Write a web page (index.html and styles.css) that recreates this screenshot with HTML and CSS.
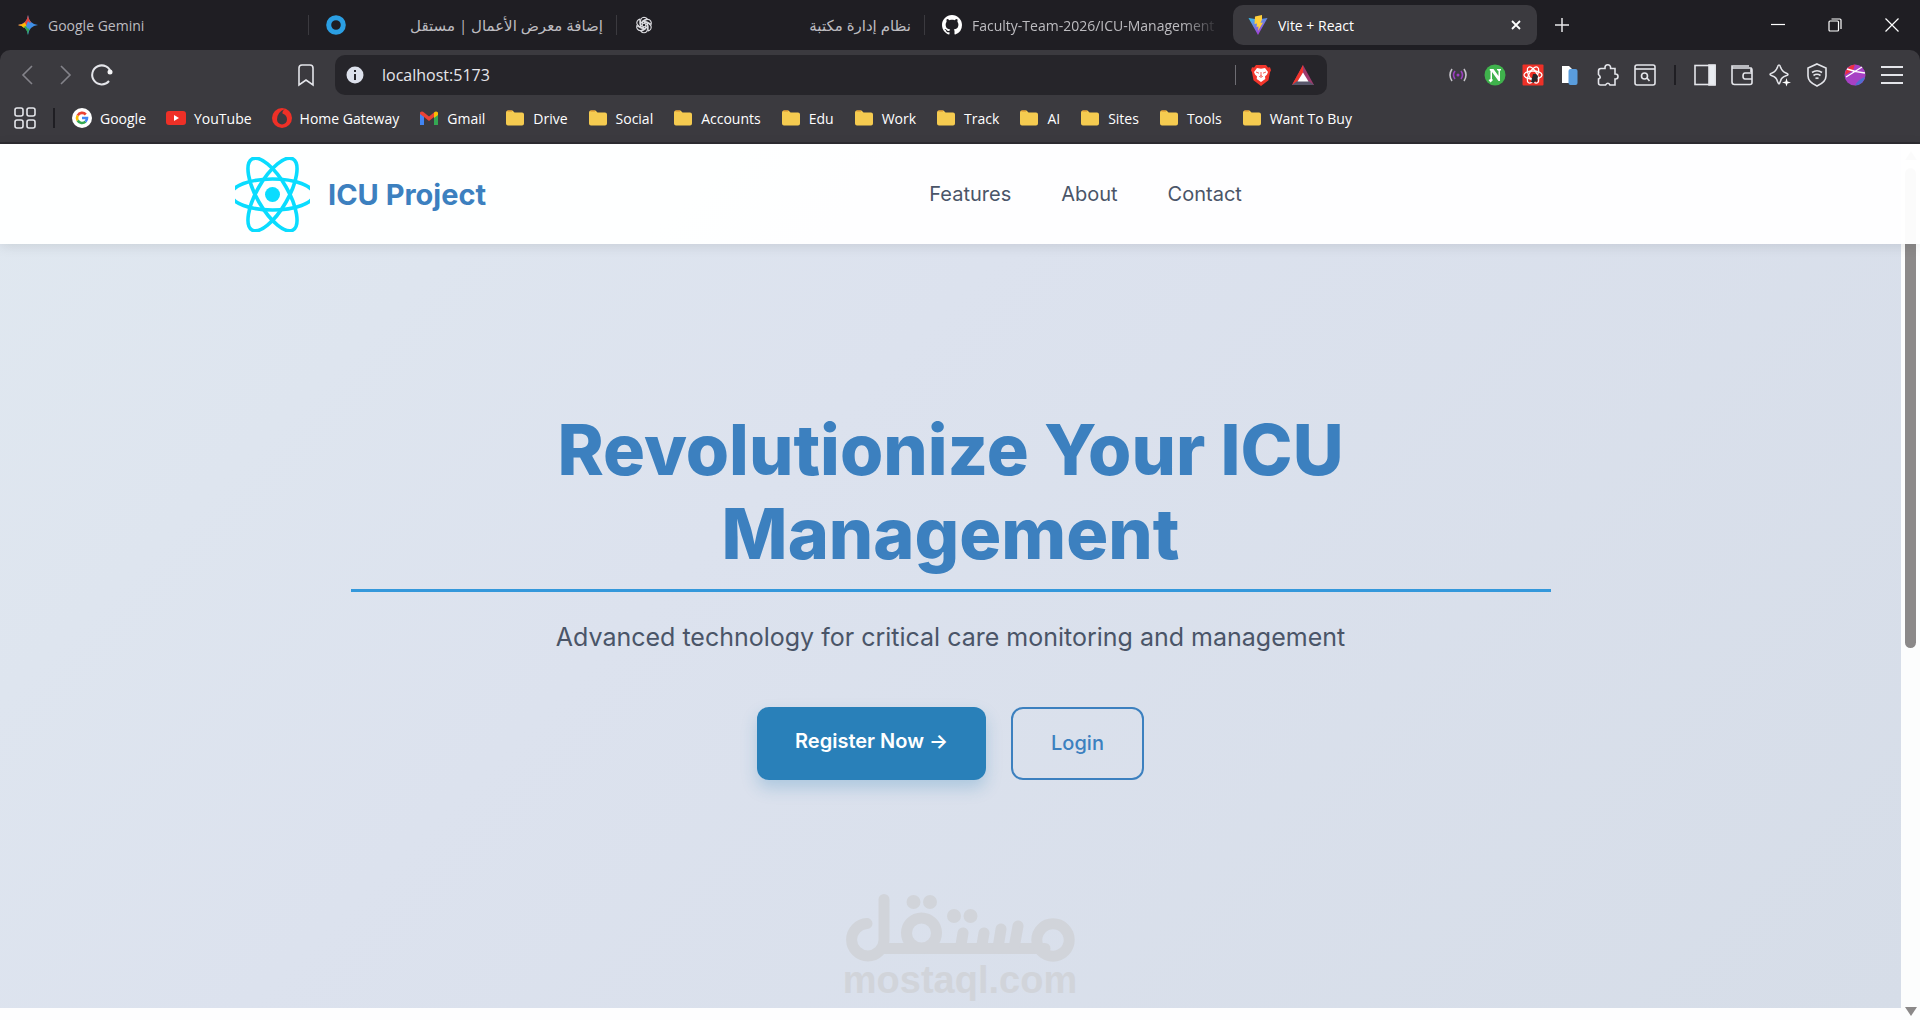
FILE: index.html
```html
<!DOCTYPE html>
<html lang="en">
<head>
    <meta charset="UTF-8">
    <meta name="viewport" content="width=device-width, initial-scale=1.0">
    <title>Vite + React</title>
    <link rel="stylesheet" href="styles.css">
</head>
<body>
    <svg class="sprite" aria-hidden="true">
        <symbol id="folder" viewBox="0 0 20 20">
            <path d="M1 4.500a2 2 0 0 1 2-2h4.500l2 2H17a2 2 0 0 1 2 2V15.500a2 2 0 0 1-2 2H3a2 2 0 0 1-2-2z" fill="#f5cb50"/>
            <path d="M2.500 3h4.500" stroke="#e0962f" stroke-width="1.200"/>
        </symbol>
    </svg>

    <div class="browser">
        <div class="tab-strip">
            <div class="tab">
                <svg class="icon" viewBox="0 0 20 20">
                    <path d="M10 0Q11 9 20 10Q11 11 10 20Q9 11 0 10Q9 9 10 0" fill="#3f8fe8"/>
                    <path d="M10 0Q9 9 0 10L7 12L13 7Q10.500 5 10 0" fill="#ea4335"/>
                    <path d="M0 10Q4.500 9.500 7 7.500L9 12L6 13Q4 10.500 0 10" fill="#fbbc04"/>
                    <path d="M5.500 12Q9 14 10 20Q10.300 16 11.500 14L8 11z" fill="#34a853"/>
                    <path d="M10 6L14 10L10 14L8 11z" fill="#3f8fe8"/>
                </svg>
                <span class="tab-title">Google Gemini</span>
            </div>
            <div class="tab">
                <svg class="icon" viewBox="0 0 20 20"><circle cx="10" cy="10" r="7.300" fill="none" stroke="#2b9fe3" stroke-width="5"/></svg>
                <span class="tab-title" dir="rtl" lang="ar">إضافة معرض الأعمال | مستقل</span>
            </div>
            <div class="tab">
                <svg class="icon" viewBox="0 0 20 20" fill="none" stroke="#dcdce0" stroke-width="1.100">
                    <g id="petal"><path d="M10 6.200L13.500 8.200V13.500Q13.500 17.500 10 17.800Q8 17.800 7 16.500L11 14.200Q11.700 13.700 11.700 13V9"/></g>
                    <use href="#petal" transform="rotate(60 10 10)"/>
                    <use href="#petal" transform="rotate(120 10 10)"/>
                    <use href="#petal" transform="rotate(180 10 10)"/>
                    <use href="#petal" transform="rotate(240 10 10)"/>
                    <use href="#petal" transform="rotate(300 10 10)"/>
                </svg>
                <span class="tab-title" dir="rtl" lang="ar">نظام إدارة مكتبة</span>
            </div>
            <div class="tab last">
                <svg class="icon" viewBox="0 0 16 16"><path fill="#fff" d="M8 0C3.580 0 0 3.580 0 8c0 3.540 2.290 6.530 5.470 7.590.4.070.55-.17.55-.38 0-.19-.01-.82-.01-1.490-2.010.37-2.530-.49-2.690-.94-.09-.23-.48-.94-.82-1.130-.28-.15-.68-.52-.01-.53.63-.01 1.080.58 1.230.82.72 1.210 1.870.87 2.330.66.07-.52.28-.87.51-1.070-1.780-.2-3.640-.89-3.640-3.950 0-.87.31-1.590.82-2.150-.08-.2-.36-1.020.08-2.120 0 0 .67-.21 2.200.82.64-.18 1.320-.27 2-.27s1.360.09 2 .27c1.530-1.040 2.200-.82 2.200-.82.44 1.100.16 1.920.08 2.120.51.56.82 1.270.82 2.150 0 3.070-1.870 3.750-3.650 3.950.29.25.54.73.54 1.480 0 1.070-.01 1.930-.01 2.200 0 .21.15.46.55.38A8.010 8.010 0 0 0 16 8c0-4.420-3.580-8-8-8z"/></svg>
                <span class="tab-title">Faculty-Team-2026/ICU-Management</span>
            </div>
            <div class="tab active">
                <svg class="icon" viewBox="0 0 20 20">
                    <defs><linearGradient id="vite" x1="0" y1="0" x2=".5" y2="1"><stop offset="0" stop-color="#35c4ef"/><stop offset="1" stop-color="#a83bd6"/></linearGradient></defs>
                    <path d="M.5 3L10 20L19.500 3L13 4H7z" fill="url(#vite)"/>
                    <path d="M14 0L7 1.500L6.500 9L9 8.500L8.500 12L10.500 11.500L10 16L15 7.500L12.500 8L14 4.500z" fill="#ffcf3a"/>
                </svg>
                <span class="tab-title">Vite + React</span>
                <button class="tab-close" aria-label="Close tab"><svg viewBox="0 0 10 10" width="10" height="10" stroke="#fff" stroke-width="1.800"><path d="M1 1l8 8M9 1l-8 8"/></svg></button>
            </div>
            <button class="new-tab" aria-label="New tab"><svg width="14" height="14" viewBox="0 0 14 14" stroke="#e8e8ea" stroke-width="1.500"><path d="M7 0v14M0 7h14"/></svg></button>
            <div class="window-buttons">
                <button aria-label="Minimize"><svg viewBox="0 0 14 14"><path d="M0 6.500h14"/></svg></button>
                <button aria-label="Restore"><svg viewBox="0 0 14 14"><rect x="1" y="3" width="9.500" height="10" rx="1"/><path d="M3.500 1H12q1 0 1 1v9"/></svg></button>
                <button aria-label="Close"><svg viewBox="0 0 14 14"><path d="M.5.5l13 13M13.500.5l-13 13"/></svg></button>
            </div>
        </div>

        <div class="toolbar">
            <div class="address-row">
                <div class="nav-buttons">
                    <button class="dim" aria-label="Back"><svg viewBox="0 0 22 22"><path d="M15 2L6 11l9 9"/></svg></button>
                    <button class="dim" aria-label="Forward"><svg viewBox="0 0 22 22"><path d="M7 2l9 9-9 9"/></svg></button>
                    <button aria-label="Reload"><svg viewBox="0 0 22 22"><path d="M18 17A9.500 9.500 0 1 1 20 9" stroke-width="2"/><circle cx="19" cy="8" r="2.500" fill="#f4f4f6" stroke="none"/></svg></button>
                </div>
                <button class="save-page" aria-label="Bookmark this page"><svg viewBox="0 0 22 22"><path d="M4 4q0-3 3-3h8q3 0 3 3v17l-7-5-7 5z"/></svg></button>
                <div class="address-bar">
                    <svg class="info" viewBox="0 0 18 18"><circle cx="9" cy="9" r="8.500" fill="#dde1ec"/><path d="M9 4v2M9 8v6" stroke="#26252a" stroke-width="2"/></svg>
                    <input type="text" aria-label="Address" value="localhost:5173">
                    <span class="bar-divider"></span>
                    <svg class="shield" viewBox="0 0 20 22">
                        <path d="M5 1h10l2 2.500 2-.2 1 3-1 2-1.500 8L10 22 2.500 16.300 1 8.300 0 6.300l1-3 2 .2z" fill="#f2352b"/>
                        <path d="M6 4l4 .8L14 4l3 4-1 2.500-2 2 .3 2.500L10 18l-4.300-3 .3-2.500-2-2L3 8z" fill="#fff"/>
                        <path d="M5 8l3 1.200M15 8l-3 1.200M10 8v3.500l-1.500 1 1.500.8 1.500-.8-1.500-1" fill="none" stroke="#f2352b" stroke-width=".8"/>
                    </svg>
                    <svg class="rewards" viewBox="0 0 22 20"><path d="M11 0L0 20h22z" fill="#9e3a6e"/><path d="M11 0L0 20l6-4.500 5-8z" fill="#f2352b"/><path d="M0 20h22l-5.500-4h-11z" fill="#59576b"/><path d="M11 7.500l-5.500 9h11z" fill="#fff"/></svg>
                </div>
                <div class="extensions">
                    <button aria-label="Live"><svg viewBox="0 0 22 22"><path d="M5 5q-4 6 0 12M17 5q4 6 0 12" stroke="#c4c1c8"/><path d="M8 7q-3 4 0 8M14 7q3 4 0 8" stroke="#9c3fc0"/><circle cx="11" cy="11" r="1.500" fill="#9c3fc0" stroke="none"/></svg></button>
                    <button aria-label="Notes"><svg viewBox="0 0 22 22"><g stroke="none"><circle cx="11" cy="11" r="10.500" fill="#3fb24c"/><path d="M6 5h3.500l5 7V7l-1.500-1V5h4v1L16 7v10h-1.500L8 8v7l1 1-2.500 2.500L4.500 16l2-1V7L5.500 6z" fill="#fff"/></g></svg></button>
                    <button aria-label="React tools"><svg viewBox="0 0 22 22"><rect x=".5" y=".5" width="21" height="21" rx="1" fill="#ee3027" stroke="none"/><g stroke="#fff" stroke-width="1.300"><ellipse cx="11" cy="11" rx="9" ry="4"/><ellipse cx="11" cy="11" rx="9" ry="4" transform="rotate(60 11 11)"/><ellipse cx="11" cy="11" rx="9" ry="4" transform="rotate(120 11 11)"/></g><path d="M11 10h3l2 2-1 6-2-1-1 2-3-1 1-4z" fill="#26252a" stroke="none"/></svg></button>
                    <button aria-label="Clipboard"><svg viewBox="0 0 22 22"><g stroke="none"><path d="M3 2h7l4 4v13H3z" fill="#fff"/><rect x="9.500" y="5" width="9" height="16" rx="2" fill="#5a9ddd"/></g></svg></button>
                    <button aria-label="Extensions"><svg viewBox="0 0 22 22"><path d="M4 4.500h4V3.500a2.800 2.800 0 0 1 5.600 0v1H18V10h.5a2.500 2.500 0 0 1 0 5H18v6h-5q-2-3.500-4.500 0H3.500q-2 0-2-2v-4q3.500-1.500 0-4.500V7q0-2.500 2.500-2.500z"/></svg></button>
                    <button aria-label="Search page"><svg viewBox="0 0 22 22"><rect x="1" y="1" width="20" height="20" rx="2"/><path d="M1 5h20"/><circle cx="10.500" cy="12" r="3"/><path d="M13 14l2.500 3"/></svg></button>
                </div>
                <span class="tool-divider"></span>
                <div class="extensions">
                    <button aria-label="Sidebar"><svg viewBox="0 0 22 22"><rect x="1" y="1.500" width="20" height="19"/><path d="M15 1h6v20h-6z" fill="#e9ecf1"/></svg></button>
                    <button aria-label="Wallet"><svg viewBox="0 0 22 22"><path d="M20 8V4H1V2h17M1 2v16q0 2.500 2.500 2.500H19q2 0 2-2V6q0-2-2-2M21 9h-7q-2 0-2 3t2 3h7"/></svg></button>
                    <button aria-label="Assistant"><svg viewBox="0 0 22 22"><path d="M10 1q1 0 1.500 2Q13 7.500 17 9q2 .8 2 1.500t-2 1.200Q12.500 13 11.500 17 10.500 20 10 20t-1.500-2.500Q7.500 13 3 11.700 1 11 1 10.300T3 9q4-1.500 5.500-6Q9 1 10 1z"/><path d="M17.500 14l1 3.500 3.500 1-3.500 1-1 3-1-3-3.500-1 3.500-1z" fill="#fff" stroke="none"/></svg></button>
                    <button aria-label="VPN"><svg viewBox="0 0 22 22"><path d="M11 0l9 4v8q0 6-9 10-9-4-9-10V4z"/><path d="M6 8.500q5-3.500 10 0M7.500 11.500q3.500-2.500 7 0M9.500 14.500q1.500-1 3 0"/></svg></button>
                    <button aria-label="Profile"><svg viewBox="0 0 22 22"><circle cx="11" cy="11" r="10.500" fill="#a740c4" stroke="none"/><path d="M1 11A10.500 10.500 0 0 1 11 .5L9 6z" fill="#ee3040" stroke="none"/><path d="M21 13a10.500 10.500 0 0 1-10 8.500q3-6 10-8.500" fill="#4e6fd0" stroke="none"/><path d="M2 13L18 3M3 5q8 3 18 4" stroke="#fff" stroke-width="1.400"/></svg></button>
                    <button aria-label="Menu"><svg viewBox="0 0 22 22"><g stroke-width="2"><path d="M0 3h22M0 11h22M0 19h22"/></g></svg></button>
                </div>
            </div>

            <div class="bookmarks">
                <button class="apps" aria-label="All bookmarks"><svg viewBox="0 0 22 22"><rect x="1" y="1" width="8" height="8" rx="2"/><rect x="13" y="1" width="8" height="8" rx="2"/><rect x="1" y="13" width="8" height="8" rx="2"/><rect x="13" y="13" width="8" height="8" rx="2"/></svg></button>
                <span class="tool-divider"></span>
                <a href="#"><svg class="icon" viewBox="0 0 20 20" fill="none" stroke-width="2.600"><circle cx="10" cy="10" r="10" fill="#fff"/><path d="M5.700 7.500A5 5 0 0 1 13.800 6.500" stroke="#ea4335"/><path d="M5.700 12.500a5 5 0 0 1 0-5" stroke="#fbbc04"/><path d="M13.500 13.600A5 5 0 0 1 5.700 12.500" stroke="#34a853"/><path d="M10 10h5a5 5 0 0 1-1.500 3.600" stroke="#4285f4"/></svg>Google</a>
                <a href="#"><svg class="icon" viewBox="0 0 20 20"><rect y="3" width="20" height="14" rx="3" fill="#ee3027"/><path d="M8 7l5 3-5 3z" fill="#fff"/></svg>YouTube</a>
                <a href="#"><svg class="icon" viewBox="0 0 20 20"><circle cx="10" cy="10" r="10" fill="#ee3027"/><path d="M13 1Q10 3 10.500 5.500Q15 7 15 11.500A5 5 0 0 1 5 11.500Q5 4 13 1" fill="#3b3a3f"/></svg>Home Gateway</a>
                <a href="#"><svg class="icon" viewBox="0 0 20 20"><path d="M1 5v12h4V8z" fill="#4285f4"/><path d="M15 8v9h4V5z" fill="#34a853"/><path d="M1 4.500Q3 2.500 5 4.500l5 4 5-4v4.500l-5 4-5-4-4-3z" fill="#ea4335"/><path d="M15 4.500q2-2 4 0V7l-4 3z" fill="#fbbc04"/></svg>Gmail</a>
                <a href="#"><svg class="icon"><use href="#folder"/></svg>Drive</a>
                <a href="#"><svg class="icon"><use href="#folder"/></svg>Social</a>
                <a href="#"><svg class="icon"><use href="#folder"/></svg>Accounts</a>
                <a href="#"><svg class="icon"><use href="#folder"/></svg>Edu</a>
                <a href="#"><svg class="icon"><use href="#folder"/></svg>Work</a>
                <a href="#"><svg class="icon"><use href="#folder"/></svg>Track</a>
                <a href="#"><svg class="icon"><use href="#folder"/></svg>AI</a>
                <a href="#"><svg class="icon"><use href="#folder"/></svg>Sites</a>
                <a href="#"><svg class="icon"><use href="#folder"/></svg>Tools</a>
                <a href="#"><svg class="icon"><use href="#folder"/></svg>Want To Buy</a>
            </div>
        </div>
    </div>

    <div class="viewport">
        <header class="site-header">
            <div class="header-inner">
                <a class="brand" href="#">
                    <svg class="brand-logo" viewBox="0 0 75 75" fill="none" stroke="#0adcff" stroke-width="3.600">
                        <ellipse cx="37.500" cy="37.500" rx="41" ry="15.500"/>
                        <ellipse cx="37.500" cy="37.500" rx="41" ry="15.500" transform="rotate(60 37.500 37.500)"/>
                        <ellipse cx="37.500" cy="37.500" rx="41" ry="15.500" transform="rotate(120 37.500 37.500)"/>
                        <circle cx="37.500" cy="37.500" r="7.500" fill="#0adcff" stroke="none"/>
                    </svg>
                    <span>ICU Project</span>
                </a>
                <nav class="site-nav">
                    <a href="#features">Features</a>
                    <a href="#about">About</a>
                    <a href="#contact">Contact</a>
                </nav>
            </div>
        </header>

        <main class="hero">
            <div class="hero-content">
                <h1>Revolutionize Your ICU<br>Management</h1>
                <p>Advanced technology for critical care monitoring and management</p>
                <div class="hero-buttons">
                    <a class="btn btn-primary" href="#register">Register Now →</a>
                    <a class="btn btn-outline" href="#login">Login</a>
                </div>
            </div>
        </main>

        <div class="scrollbar">
            <span class="arrow-up"></span>
            <span class="thumb"></span>
            <span class="arrow-down"></span>
        </div>

        <div class="watermark">
            <svg viewBox="0 0 230 68" fill="none" stroke="#d1d4da" stroke-width="11" stroke-linecap="round" role="img" aria-label="مستقل">
                <path d="M22 29.500A16.200 16.200 0 1 0 39 46V5.500M38 54.500H200"/>
                <circle cx="76.500" cy="39" r="15"/>
                <circle cx="208" cy="46" r="16.200"/>
                <path d="M118 39l-2.500 15M139 39l-2.500 15M156 35l-3 19M173 32l-4 22"/>
                <g fill="#d1d4da" stroke="none"><circle cx="68.500" cy="8" r="7"/><circle cx="85" cy="8" r="7"/><circle cx="109" cy="22" r="7"/><circle cx="125.500" cy="22" r="7"/></g>
            </svg>
            <span>mostaql.com</span>
        </div>
    </div>
</body>
</html>
```

FILE: styles.css
```css
* {
    box-sizing: border-box;
}
body {
    font-family: 'Inter', sans-serif;
    background-color: #fdfdfe;
    margin: 0;
    min-height: 100vh;
    display: flex;
    flex-direction: column;
}
a {
    text-decoration: none;
    color: inherit;
}
button {
    background: none;
    border: none;
    padding: 0;
    display: flex;
    align-items: center;
    justify-content: center;
    cursor: pointer;
}
.sprite {
    display: none;
}
.icon {
    width: 20px;
    height: 20px;
    flex-shrink: 0;
}

/* Browser window */
.browser {
    font-family: 'Open Sans', 'DejaVu Sans', sans-serif;
    font-size: 14px;
    background-color: #1f1e23;
    color: #fff;
}
.tab-strip {
    display: flex;
    align-items: center;
    height: 50px;
    padding-left: 1px;
}
.tab {
    display: flex;
    align-items: center;
    gap: 10px;
    flex: 0 1 308px;
    min-width: 0;
    height: 20px;
    padding: 0 13px 0 17px;
    border-right: 1px solid #3b3a3f;
    color: #bdbcc0;
}
.tab-title {
    flex: 1;
    min-width: 0;
    overflow: hidden;
    white-space: nowrap;
}
.tab-title:lang(ar) {
    font-size: 15px;
}
.tab.last {
    border-right-color: transparent;
}
.tab.last .tab-title {
    mask-image: linear-gradient(to right, #000 85%, transparent);
}
.tab.active {
    flex-basis: 304px;
    height: 40px;
    padding: 0 16px 0 15px;
    border: none;
    border-radius: 10px;
    background-color: #3b3a3f;
    color: #fff;
}
.new-tab {
    width: 50px;
    height: 40px;
}
.window-buttons {
    display: flex;
    margin-left: auto;
}
.window-buttons button {
    width: 57px;
    height: 50px;
}
.window-buttons svg {
    width: 14px;
    height: 14px;
    fill: none;
    stroke: #fff;
    stroke-width: 1.2;
}
.toolbar {
    background-color: #3b3a3f;
    border-radius: 10px 10px 0 0;
    border-bottom: 2px solid #2d2c31;
}
.toolbar button svg {
    width: 22px;
    height: 22px;
    overflow: visible;
    fill: none;
    stroke: #e4e5ea;
    stroke-width: 1.6;
}
.toolbar .dim svg {
    stroke: #84838a;
}
.address-row {
    display: flex;
    align-items: center;
    padding: 5px 17px;
}
.nav-buttons {
    display: flex;
    gap: 15px;
}
.save-page {
    margin-left: 182px;
    margin-right: 18px;
}
.address-bar {
    display: flex;
    align-items: center;
    flex: 1;
    max-width: 992px;
    height: 40px;
    padding: 0 13px 0 11px;
    border-radius: 10px;
    background-color: #26252a;
}
.address-bar input {
    flex: 1;
    min-width: 0;
    padding: 0 18px;
    border: none;
    outline: none;
    background: none;
    color: #e6e6ea;
    font-family: inherit;
    font-size: 16px;
}
.info {
    width: 18px;
    height: 18px;
}
.bar-divider {
    width: 1px;
    height: 20px;
    background-color: #6e6d73;
}
.shield {
    width: 20px;
    height: 22px;
    margin: 0 21px 0 15px;
}
.rewards {
    width: 22px;
    height: 20px;
}
.extensions {
    display: flex;
    justify-content: space-between;
    width: 209px;
}
.address-bar + .extensions {
    margin-left: auto;
}
.tool-divider {
    width: 2px;
    height: 20px;
    margin: 0 18px;
    background-color: #1f1e23;
}
.bookmarks {
    display: flex;
    align-items: center;
    gap: 20px;
    height: 42px;
    padding: 0 14px 6px;
    white-space: nowrap;
}
.bookmarks .tool-divider {
    margin: 0 -3px;
}
.bookmarks a {
    display: flex;
    align-items: center;
    gap: 8px;
}

/* Page */
.viewport {
    position: relative;
    flex: 1;
    display: flex;
    align-items: flex-start;
}
.site-header {
    position: absolute;
    top: 0;
    left: 0;
    right: 0;
    z-index: 2;
    padding: 0 20px;
    background-color: rgba(255, 255, 255, 0.97);
    box-shadow: 0 2px 12px rgba(0, 0, 0, 0.1);
}
.header-inner {
    display: flex;
    align-items: center;
    justify-content: space-between;
    max-width: 1450px;
    height: 100px;
    margin: 0 auto;
}
.brand {
    display: flex;
    align-items: center;
    gap: 18px;
    color: #3c80bf;
    font-size: 29px;
    font-weight: 700;
}
.brand-logo {
    width: 75px;
    height: 75px;
}
.site-nav {
    display: flex;
    gap: 50px;
    margin: 0 auto;
    color: #4a5568;
    font-size: 20px;
    font-weight: 400;
}
.hero {
    flex: 1;
    padding: 264px 20px 228px;
    text-align: center;
    background: linear-gradient(135deg, #e0e8f0 0%, #dce2ee 40%, #d6dde8 100%);
}
.hero-content {
    max-width: 1200px;
    margin: 0 auto;
}
h1 {
    margin: 0 0 28px;
    padding-bottom: 13px;
    border-bottom: 3px solid #3498db;
    color: #3c80bf;
    font-size: 70px;
    line-height: 84px;
    font-weight: 800;
}
.hero p {
    margin: 0 0 52px;
    color: #4a5568;
    font-size: 25px;
    line-height: 35px;
    font-weight: 400;
}
.hero-buttons {
    display: flex;
    justify-content: center;
    gap: 25px;
}
.btn {
    padding: 20px 38px;
    border-radius: 12px;
    font-size: 20px;
    line-height: 29px;
}
.btn-primary {
    background-color: #2980b9;
    color: #fff;
    font-weight: 600;
    box-shadow: 0 8px 16px rgba(41, 128, 185, 0.25);
}
.btn-outline {
    border: 2px solid #3c80bf;
    color: #3c80bf;
    font-weight: 500;
}
.scrollbar {
    display: flex;
    flex-direction: column;
    align-items: center;
    align-self: stretch;
    width: 19px;
    padding: 7px 0 4px;
    background-color: #fcfdfd;
}
.scrollbar .thumb {
    width: 11px;
    height: 480px;
    margin-top: 8px;
    border-radius: 6px;
    background-color: #8b8989;
}
.arrow-up, .arrow-down {
    border: 6px solid transparent;
}
.arrow-up {
    border-top: 0;
    border-bottom: 9px solid #8b8989;
}
.arrow-down {
    margin-top: auto;
    border-bottom: 0;
    border-top: 9px solid #8b8989;
}
.watermark {
    position: absolute;
    left: 50%;
    bottom: 21px;
    display: flex;
    flex-direction: column;
    align-items: center;
    width: 234px;
    margin-left: -117px;
    color: #d1d4da;
    font-family: 'Liberation Sans', sans-serif;
    font-size: 38px;
    font-weight: 700;
    line-height: 37px;
}
.watermark svg {
    width: 230px;
    height: 68px;
}
```
